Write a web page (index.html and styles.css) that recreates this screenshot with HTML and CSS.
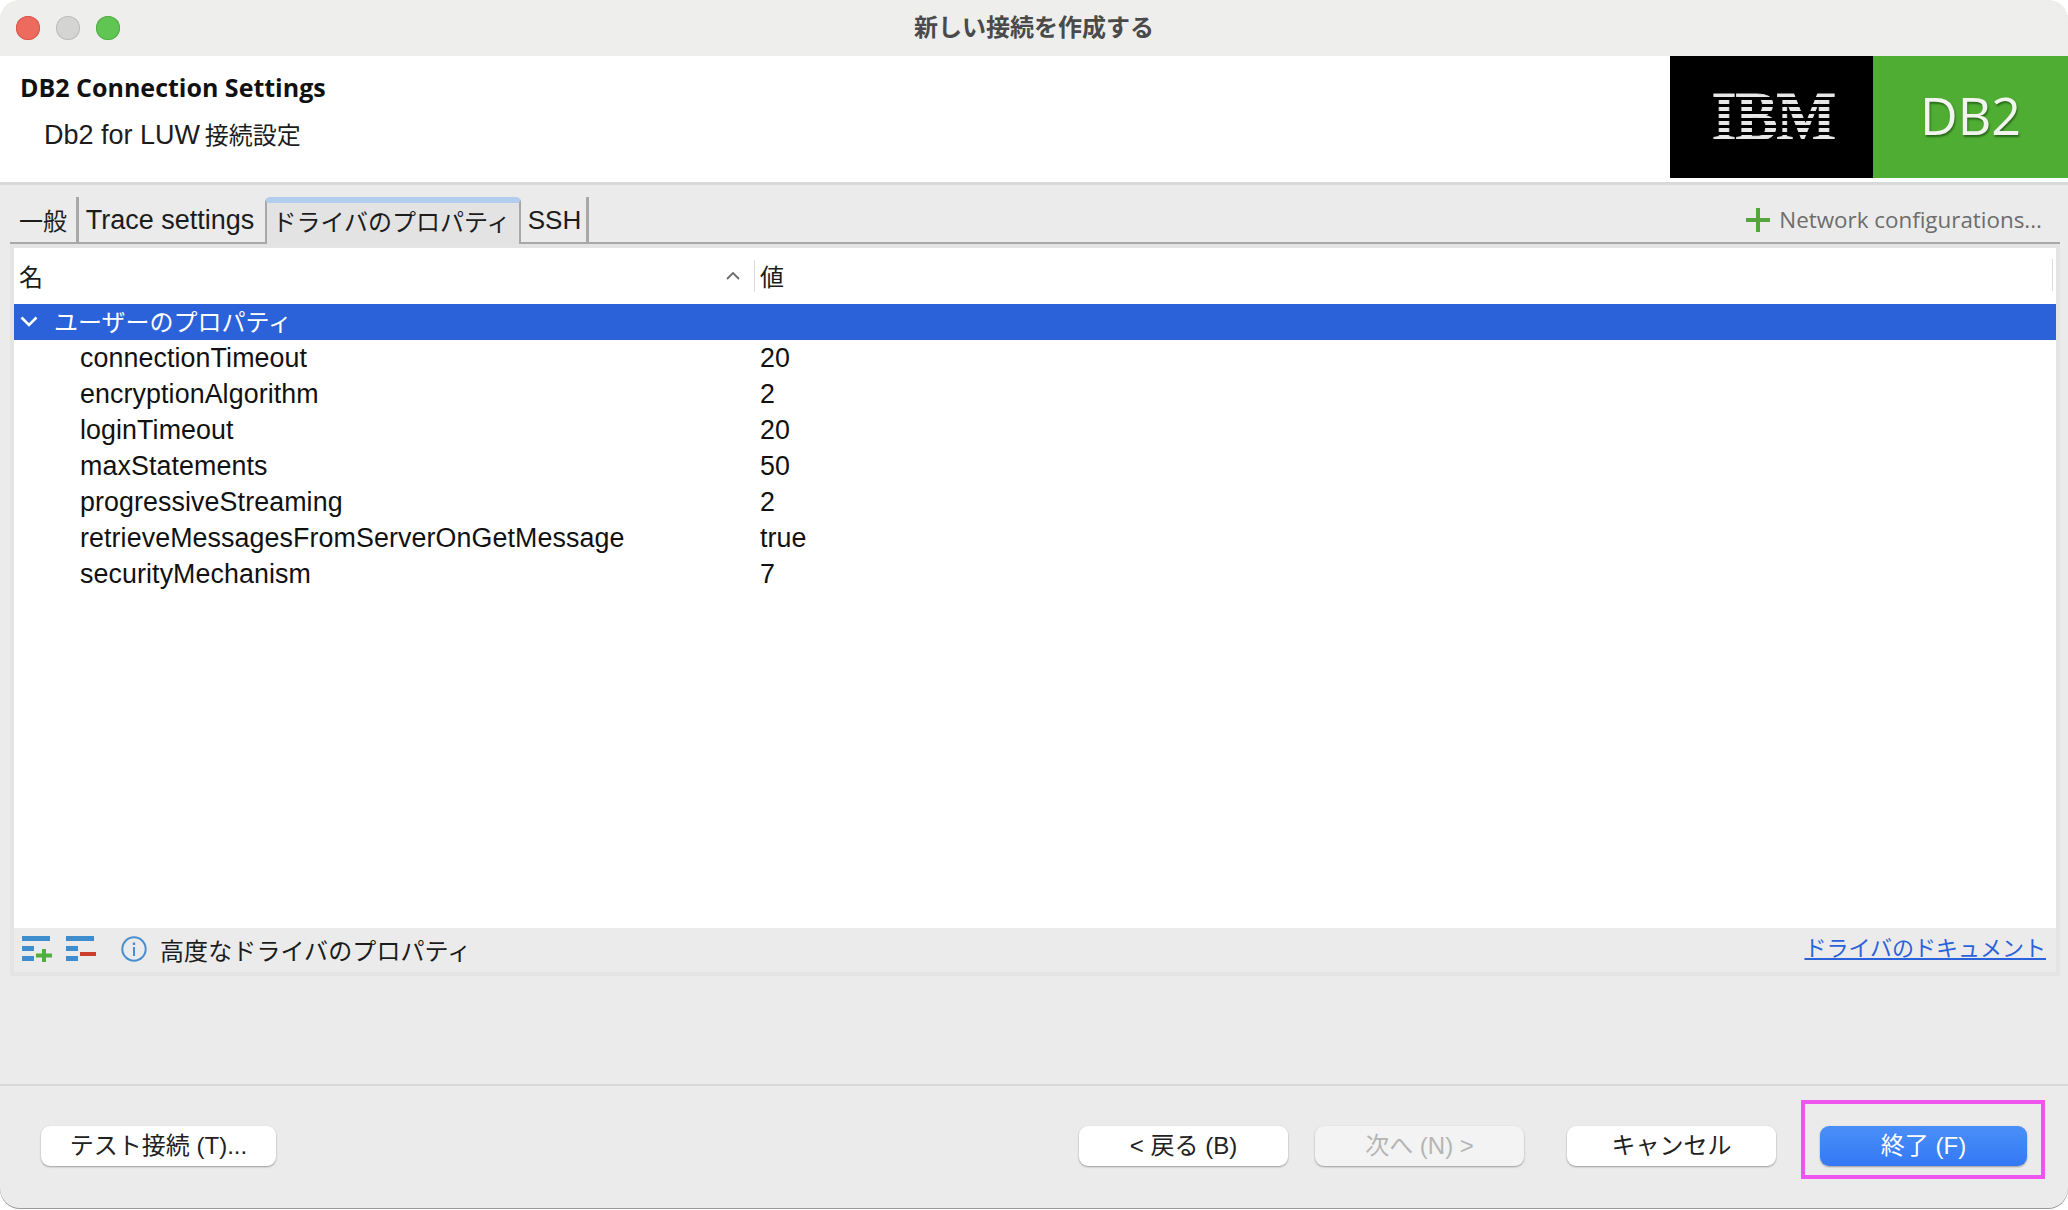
FILE: index.html
```html
<!DOCTYPE html>
<html lang="ja">
<head>
<meta charset="utf-8">
<title>新しい接続を作成する</title>
<link rel="stylesheet" href="styles.css">
</head>
<body>
<div class="window">
  <header class="titlebar">
    <div class="lights"><i class="light red"></i><i class="light gray"></i><i class="light green"></i></div>
    <div class="title">新しい接続を作成する</div>
  </header>
  <section class="banner">
    <div class="banner-text">
      <div class="banner-title">DB2 Connection Settings</div>
      <div class="banner-sub"><span class="latin">Db2 for LUW</span> 接続設定</div>
    </div>
    <div class="logo">
      <div class="logo-ibm"><span>IBM</span></div>
      <div class="logo-db2">DB2</div>
    </div>
  </section>
  <main class="content">
    <div class="tabbar">
      <div class="tab tab-first">一般</div>
      <div class="tab tab-trace">Trace settings</div>
      <div class="tab tab-active">ドライバのプロパティ</div>
      <div class="tab tab-ssh">SSH</div>
      <div class="netconf">
        <svg class="plus" width="24" height="24" viewBox="0 0 24 24"><path d="M10 0h4v10h10v4H14v10h-4V14H0v-4h10z"/></svg>
        <span>Network configurations...</span>
      </div>
    </div>
    <div class="frame">
      <div class="table">
        <div class="thead">
          <div class="th th-name"><span>名</span>
            <svg class="sort" width="14" height="8" viewBox="0 0 14 8"><path d="M1 7l6-6 6 6"/></svg>
          </div>
          <div class="th th-val">値</div>
          <i class="th-end"></i>
        </div>
        <div class="group">
          <svg class="chev" width="18" height="11" viewBox="0 0 18 11"><path d="M1.5 1.5L9 9l7.5-7.5"/></svg>
          <span>ユーザーのプロパティ</span>
        </div>
        <div class="row"><span class="k">connectionTimeout</span><span class="v">20</span></div>
        <div class="row"><span class="k">encryptionAlgorithm</span><span class="v">2</span></div>
        <div class="row"><span class="k">loginTimeout</span><span class="v">20</span></div>
        <div class="row"><span class="k">maxStatements</span><span class="v">50</span></div>
        <div class="row"><span class="k">progressiveStreaming</span><span class="v">2</span></div>
        <div class="row"><span class="k">retrieveMessagesFromServerOnGetMessage</span><span class="v">true</span></div>
        <div class="row"><span class="k">securityMechanism</span><span class="v">7</span></div>
      </div>
      <div class="tools">
        <svg class="ti" width="30" height="26" viewBox="0 0 30 26"><path class="b" d="M0 0h28v5H0zM0 10h12v5H0zM0 20h12v5H0z"/><path class="g" d="M20 13h4v4.500h6v4h-6V26h-4v-4.500h-6v-4h6z"/></svg>
        <svg class="ti" width="30" height="26" viewBox="0 0 30 26"><path class="b" d="M0 0h28v5H0zM0 10h12v5H0zM0 20h12v5H0z"/><path class="r" d="M14 16h16v4H14z"/></svg>
        <svg class="info" width="26" height="26" viewBox="0 0 26 26"><circle cx="13" cy="13" r="11.7"/><path class="dot" d="M11.800 6.500h2.400v2.600h-2.400zM12 11h2v9h-2z"/></svg>
        <span class="adv">高度なドライバのプロパティ</span>
        <a class="doc" href="#">ドライバのドキュメント</a>
      </div>
    </div>
  </main>
  <footer class="footer">
    <button class="btn btn-test">テスト接続 (T)...</button>
    <div class="nav">
      <button class="btn">&lt; 戻る (B)</button>
      <button class="btn btn-off">次へ (N) &gt;</button>
    </div>
    <button class="btn btn-cancel">キャンセル</button>
    <div class="highlight"><button class="btn btn-primary">終了 (F)</button></div>
  </footer>
</div>
</body>
</html>
```
FILE: styles.css
```css
* { box-sizing: border-box; }
html, body { margin: 0; height: 100%; background: #fff; }
body { font-family: "Liberation Sans", "Noto Sans CJK JP", sans-serif; color: #1c1c1c; font-size: 24px; }

.window { height: 1208px; background: #ebebeb; border-radius: 20px; overflow: hidden; display: flex; flex-direction: column; box-shadow: 0 1px 0 #9a9a9a; }

.titlebar { height: 57px; flex: none; background: #eeeeec; border-bottom: 1px solid #d9d9d9; display: flex; align-items: center; justify-content: center; position: relative; }
.lights { position: absolute; left: 16px; top: 16px; display: flex; gap: 16px; }
.light { width: 24px; height: 24px; border-radius: 50%; display: block; }
.red { background: #ed6a5e; box-shadow: inset 0 0 0 1px #d9584d; }
.gray { background: #d4d4d2; box-shadow: inset 0 0 0 1px #bdbdbb; }
.green { background: #61c554; box-shadow: inset 0 0 0 1px #53ad47; }
.title { font-size: 24px; font-weight: 700; color: #4a4a4a; font-family: "Noto Sans CJK JP", sans-serif; padding-bottom: 5px; }

.banner { height: 129px; flex: none; background: #fff; border-bottom: 3px solid #d8d8d8; display: flex; justify-content: space-between; margin-top: -1px; position: relative; }
.banner-text { padding: 16px 0 0 20px; }
.banner-title { font-family: "Open Sans", "Noto Sans CJK JP", sans-serif; font-weight: 700; font-size: 25px; line-height: 30px; color: #111; }
.banner-sub { font-size: 24px; line-height: 34px; padding: 15px 0 0 24px; margin-top: 1px; word-spacing: -2px; }
.latin { font-size: 27px; word-spacing: 0; }
.logo { width: 398px; height: 122px; display: flex; }
.logo-ibm { width: 203px; background: #000; display: flex; align-items: center; justify-content: center; padding-left: 4px; }
.logo-ibm span { font-family: "Liberation Serif", serif; font-weight: 700; font-size: 70px; line-height: 48px; height: 48px; letter-spacing: -1px; color: transparent; transform: scaleX(.9); background: repeating-linear-gradient(to bottom, #e8e8e8 0 4px, #000 4px 7px); -webkit-background-clip: text; background-clip: text; -webkit-text-stroke: 1px transparent; }
.logo-db2 { flex: 1; background: #4fad33; color: #f2f5ee; font-family: "Open Sans", sans-serif; font-size: 52px; text-align: center; line-height: 118px; text-shadow: 1px 2px 2px #2b6a1c; }

.content { flex: 1; display: flex; flex-direction: column; padding: 12px 8px 0 10px; min-height: 0; }
.tabbar { height: 47px; flex: none; display: flex; align-items: stretch; border-bottom: 2px solid #a8a8a8; position: relative; }
.tab { font-size: 24px; display: flex; align-items: center; justify-content: center; border-right: 3px solid #a8a8a8; padding-bottom: 1px; }
.tab-first { width: 69px; }
.tab-trace { width: 186px; font-size: 27px; border-right: 0; padding: 2px 4px 1px 0; }
.tab-active { width: 256px; background: #e3e3e3; border: 2px solid #a8a8a8; border-top: 6px solid #b3cdf0; border-bottom: 0; border-radius: 5px 5px 0 0; margin-bottom: -2px; padding: 0 3px 6px 0; }
.tab-ssh { width: 68px; font-size: 26px; padding: 3px 0 1px 2px; }
.netconf { margin-left: auto; display: flex; align-items: center; gap: 9px; padding-right: 18px; font-family: "Open Sans", sans-serif; font-size: 22.4px; color: #6d6d6d; }
.plus { fill: #55a53f; }

.frame { flex: 1; min-height: 0; background: #e4e4e4; display: flex; flex-direction: column; padding: 4px; width: 2050px; }
.table { flex: 1; min-height: 0; background: #fff; }
.thead { height: 54px; display: flex; align-items: center; position: relative; margin-bottom: 2px; }
.th { height: 100%; display: flex; align-items: center; font-size: 24px; }
.th-name { width: 741px; padding-left: 5px; justify-content: space-between; padding-right: 15px; position: relative; }
.th-val { flex: 1; padding-left: 5px; }
.th-name::after { content: ""; position: absolute; right: 0; top: 12px; bottom: 10px; width: 1px; background: #dcdcdc; }
.th-end { width: 1px; height: 32px; background: #dcdcdc; margin-right: 3px; }
.sort { fill: none; stroke: #6a6a6a; stroke-width: 1.8; margin-top: 2px; }
.group { height: 36px; background: #2b62d9; color: #fff; display: flex; align-items: center; padding-left: 6px; padding-bottom: 4px; gap: 16px; }
.chev { fill: none; stroke: #fff; stroke-width: 2.6; margin-top: 3px; }
.row { height: 36px; display: flex; align-items: center; font-size: 26.8px; letter-spacing: .1px; color: #111; }
.k { width: 746px; padding-left: 66px; }

.tools { height: 44px; flex: none; display: flex; align-items: center; background: #ebebeb; padding: 0 10px 2px 8px; }
.ti { margin-right: 14px; flex: none; }
.ti .b { fill: #3e8dcf; }
.ti .g { fill: #4fae3d; }
.ti .r { fill: #cb3f2a; }
.info { margin-left: 11px; margin-right: 13px; fill: none; }
.info circle { stroke: #4a90d0; stroke-width: 2; }
.info .dot { fill: #4a90d0; }
.adv { letter-spacing: .1px; }
.doc { margin-left: auto; color: #2b62d9; font-size: 22px; position: relative; top: -3px; text-decoration: underline; }

.footer { display: flex; align-items: flex-start; height: 124px; flex: none; border-top: 2px solid #d8d8d8; margin-top: 108px; padding: 40px 0 0 41px; position: relative; }
.btn { font-family: inherit; font-size: 24px; color: #222; height: 40px; width: 209px; border: 0; border-radius: 9px; background: #fff; box-shadow: 0 1px 2px rgba(0,0,0,.35); padding: 0 0 5px; }
.btn-test { width: 235px; }
.nav { display: flex; gap: 27px; margin-left: auto; }
.btn-off { background: #f3f3f3; color: #b5b5b5; }
.btn-cancel { margin-left: 43px; }
.highlight { margin: -26px 23px 0 25px; padding: 22px 15px 0 15px; width: 244px; height: 79px; border: 4px solid #ee55ee; }
.btn-primary { background: linear-gradient(#4a8ff7, #3478f6); color: #fff; width: 207px; }
```
